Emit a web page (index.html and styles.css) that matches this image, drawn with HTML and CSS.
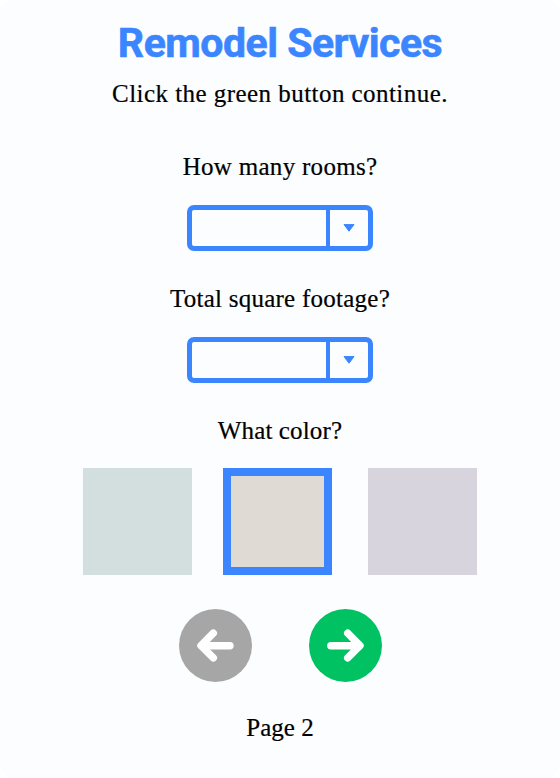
FILE: index.html
```
<!DOCTYPE html>
<html lang="en">
<head>
    <meta charset="UTF-8">
    <meta name="viewport" content="width=device-width, initial-scale=1.0">
    <title>Remodel Services</title>
    <link rel="stylesheet" href="styles.css">
</head>
<body>
    <main class="page">
        <h1>Remodel Services</h1>
        <p class="text intro">Click the green button continue.</p>

        <p class="text rooms-label">How many rooms?</p>
        <button class="dropdown" aria-label="Rooms">
            <span class="dropdown-value"></span>
            <span class="dropdown-arrow"><svg width="12" height="8" viewBox="0 0 12 8"><path d="M1 .6h10L6 7.2z"/></svg></span>
        </button>

        <p class="text footage-label">Total square footage?</p>
        <button class="dropdown" aria-label="Square footage">
            <span class="dropdown-value"></span>
            <span class="dropdown-arrow"><svg width="12" height="8" viewBox="0 0 12 8"><path d="M1 .6h10L6 7.2z"/></svg></span>
        </button>

        <p class="text color-label">What color?</p>
        <div class="swatches">
            <button class="swatch green" aria-label="Green"></button>
            <button class="swatch beige selected" aria-label="Beige"></button>
            <button class="swatch purple" aria-label="Purple"></button>
        </div>

        <div class="nav">
            <button class="nav-button back" aria-label="Back">
                <svg viewBox="0 0 73 73"><path d="M51 36.7H22.5M34.3 24.2L22 36.7L34.3 48.9"/></svg>
            </button>
            <button class="nav-button next" aria-label="Continue">
                <svg viewBox="0 0 73 73"><path d="M21.8 36.7H50M38.7 24.2L51 36.7L38.7 48.9"/></svg>
            </button>
        </div>

        <p class="text page-number">Page 2</p>
    </main>
</body>
</html>
```
FILE: styles.css
```
body {
    margin: 0;
    background: #ffffff;
}

.page {
    display: flex;
    flex-direction: column;
    align-items: center;
    box-sizing: border-box;
    height: 778px;
    padding-top: 18px;
    background: #fbfdff;
    border-radius: 14px;
}

h1 {
    margin: 0;
    font-family: Roboto, sans-serif;
    font-size: 41px;
    font-weight: 700;
    line-height: 50px;
    letter-spacing: -0.5px;
    color: #3b86ff;
    -webkit-text-stroke: 0.6px #3b86ff;
}

.text {
    margin: 0;
    font-family: "Liberation Serif", serif;
    font-size: 25px;
    line-height: 30px;
    color: #000000;
    white-space: nowrap;
    -webkit-text-stroke: 0.2px #000000;
}

.intro {
    margin-top: 11px;
    letter-spacing: 0.45px;
}

.rooms-label {
    margin-top: 43px;
    letter-spacing: 0.3px;
}

.footage-label {
    margin-top: 33px;
    letter-spacing: 0.25px;
}

.color-label {
    margin-top: 33px;
    letter-spacing: 0.15px;
}

button {
    padding: 0;
    border: none;
    background: none;
    cursor: pointer;
}

.dropdown {
    display: flex;
    box-sizing: border-box;
    width: 186px;
    height: 46px;
    margin-top: 23px;
    border: 5px solid #3b86ff;
    border-radius: 7px;
}

.dropdown-value {
    flex: 1;
}

.dropdown-arrow {
    display: flex;
    justify-content: center;
    align-items: center;
    align-self: stretch;
    width: 38px;
    border-left: 4px solid #3b86ff;
}

.dropdown-arrow path {
    fill: #3b86ff;
    stroke: #3b86ff;
    stroke-width: 1;
    stroke-linejoin: round;
}

.swatches {
    display: flex;
    width: 394px;
    margin-top: 22px;
}

.swatch {
    box-sizing: border-box;
    width: 109px;
    height: 107px;
}

.green {
    background: #d3dfde;
}

.beige {
    margin-left: 31px;
    margin-right: 36px;
    background: #dfdad3;
}

.purple {
    background: #d8d4de;
}

.selected {
    border: 8px solid #3b86ff;
}

.nav {
    display: flex;
    gap: 57px;
    margin-top: 34px;
}

.nav-button {
    width: 73px;
    height: 73px;
    border-radius: 50%;
}

.nav-button svg {
    display: block;
}

.nav-button path {
    fill: none;
    stroke: #ffffff;
    stroke-width: 7.4;
    stroke-linecap: round;
    stroke-linejoin: round;
}

.back {
    background: #a6a6a6;
}

.next {
    background: #00c263;
}

.page-number {
    margin-top: 31px;
}
```
